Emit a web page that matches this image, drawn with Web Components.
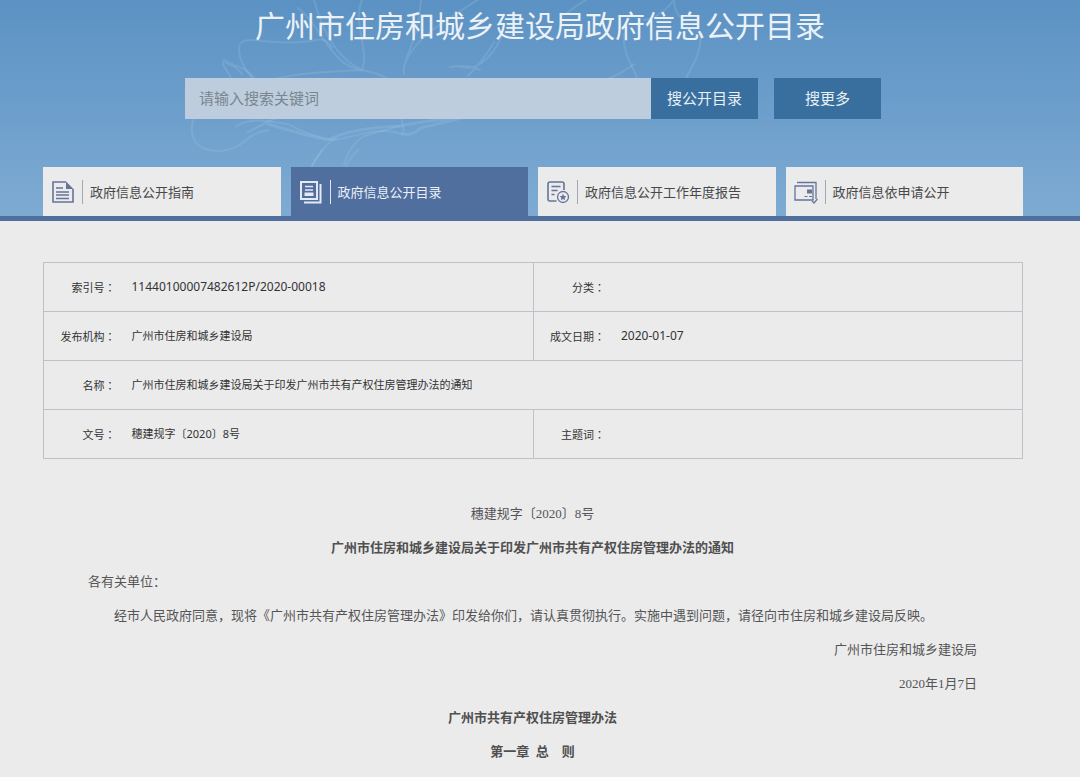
<!DOCTYPE html>
<html lang="zh-CN">
<head>
<meta charset="utf-8">
<meta name="viewport" content="width=device-width, initial-scale=1">
<title>广州市住房和城乡建设局政府信息公开目录</title>
<style>
  :root {
    --accent: #506e9e;
    --paper: #ebebec;
    --gutter-left: 43px;
    --gutter-right: 57px;
    --sans: "Noto Sans", "Noto Sans CJK SC", sans-serif;
    --song: "Liberation Serif", "Noto Sans CJK SC", serif;
  }
  body { margin: 0; background: var(--paper); color: #333; font-family: var(--sans); }
</style>
</head>
<body>
<gov-header>
  <span slot="title">广州市住房和城乡建设局政府信息公开目录</span>
  <search-bar slot="search"></search-bar>
  <tab-link slot="tabs" icon="guide">政府信息公开指南</tab-link>
  <tab-link slot="tabs" icon="catalog" active>政府信息公开目录</tab-link>
  <tab-link slot="tabs" icon="report">政府信息公开工作年度报告</tab-link>
  <tab-link slot="tabs" icon="apply">政府信息依申请公开</tab-link>
</gov-header>
<page-main>
  <record-table></record-table>
  <doc-article>
    <doc-line align="center">穗建规字〔2020〕8号</doc-line>
    <doc-line align="center" strong>广州市住房和城乡建设局关于印发广州市共有产权住房管理办法的通知</doc-line>
    <doc-line>各有关单位：</doc-line>
    <doc-line indent>经市人民政府同意，现将《广州市共有产权住房管理办法》印发给你们，请认真贯彻执行。实施中遇到问题，请径向市住房和城乡建设局反映。</doc-line>
    <doc-line align="right">广州市住房和城乡建设局</doc-line>
    <doc-line align="right">2020年1月7日</doc-line>
    <doc-line align="center" strong>广州市共有产权住房管理办法</doc-line>
    <doc-line align="center" strong>第一章&ensp;总&emsp;则</doc-line>
  </doc-article>
</page-main>

<template id="gov-header">
  <style>
    :host { display: block; }
    header {
      position: relative; overflow: hidden;
      padding-top: 6px;
      background: linear-gradient(#5b92c3, #6b9dcb 45%, #7eabd2);
      border-bottom: 5px solid var(--accent);
    }
    .flower { position: absolute; left: 180px; top: 0; width: 540px; height: 216px; }
    .content { position: relative; }
    h1 { margin: 0 0 32px; font-size: 30px; line-height: 40px; font-weight: 400; text-align: center; color: #ecf1f6; }
    .inner { padding: 0 var(--gutter-right) 0 var(--gutter-left); }
    nav { display: grid; grid-template-columns: repeat(4, 1fr); gap: 10px; margin-top: 48px; }
  </style>
  <header>
    <svg class="flower" viewBox="180 0 540 216" fill="none" stroke="#a3cbea" stroke-opacity=".22" stroke-width="2" stroke-linecap="round" aria-hidden="true">
      <path d="M252 78C242 66 237 54 240 44Q244 38 262 41Q290 44 312 41Q326 36 332 48"/>
      <path d="M232 80C228 70 220 64 224 60C232 66 246 66 254 78M226 63Q236 66 242 74"/>
      <path d="M362 70C330 66 322 26 298 8M362 70C336 58 322 30 314 0M362 70C370 50 352 24 362 0"/>
      <path d="M362 70C330 72 270 72 246 92M362 70C382 74 396 80 402 96Q400 116 404 132"/>
      <path d="M404 74C402 58 418 44 421 0M404 66Q412 44 438 26T478 0"/>
      <path d="M502 36C490 62 474 72 458 66M450 67Q468 64 480 70M494 42Q484 60 468 76"/>
      <path d="M193 120C188 142 200 152 222 151C246 148 244 134 268 130M236 126C252 116 272 122 288 124C306 134 320 138 334 140C358 136 378 126 402 134"/>
      <path d="M268 124Q300 134 328 140Q350 128 400 126Q430 120 458 118M402 134Q414 136 420 128L470 116" stroke-width="3"/>
      <path d="M312 165C322 150 328 142 336 138M344 165Q350 144 364 136L400 126M248 132Q290 110 322 98"/>
      <path d="M624 34C622 52 632 64 637 78M700 34C702 50 694 64 686 78M644 20Q660 18 674 0M674 0Q674 14 684 20"/>
      <path d="M566 14Q578 4 586 0M610 78Q624 72 634 64M344 170Q350 158 358 150M310 170Q316 158 322 150"/>
    </svg>
    <div class="content">
      <h1><slot name="title"></slot></h1>
      <div class="inner">
        <slot name="search"></slot>
        <nav aria-label="栏目"><slot name="tabs"></slot></nav>
      </div>
    </div>
  </header>
</template>

<template id="search-bar">
  <style>
    :host { display: block; max-width: 696px; margin: 0 auto; }
    form { display: flex; height: 41px; margin: 0; }
    input, button { font-family: var(--sans); font-size: 15px; border: 0; border-radius: 0; box-sizing: border-box; }
    input { flex: 1; min-width: 0; padding: 0 14px 2px; background: #bdcddd; color: #333; outline: 0; }
    input::placeholder { color: #7b8590; opacity: 1; }
    button { width: 107px; padding: 0 0 2px; background: #386f9f; color: #eaf0f5; cursor: pointer; }
    .more { margin-left: 16px; }
  </style>
  <form role="search">
    <input type="text" placeholder="请输入搜索关键词" aria-label="请输入搜索关键词">
    <button type="button">搜公开目录</button>
    <button type="button" class="more">搜更多</button>
  </form>
</template>

<template id="tab-link">
  <style>
    :host { display: block; min-width: 0; }
    a {
      display: flex; align-items: center; height: 49px; padding-left: 8px;
      background: var(--paper); color: #484848; font-size: 13px; text-decoration: none; white-space: nowrap;
    }
    svg { width: 24px; height: 24px; color: #66749a; flex: none; }
    .text { margin-left: 7px; padding-left: 7px; line-height: 24px; border-left: 1px solid #a3a9b3; }
    :host([active]) a { background: var(--accent); color: #e9eef7; }
    :host([active]) svg { color: #e4e9f3; }
    :host([active]) .text { border-color: #dfe5f0; }
  </style>
  <a href="#"><svg viewBox="0 0 24 24" fill="none" stroke="currentColor" stroke-width="1.6" aria-hidden="true"></svg><span class="text"><slot></slot></span></a>
</template>

<template id="page-main">
  <style>
    :host { display: block; }
    main { padding: 41px var(--gutter-right) 0 var(--gutter-left); }
  </style>
  <main><slot></slot></main>
</template>

<template id="record-table">
  <style>
    :host { display: block; }
    table { width: 100%; border-collapse: collapse; table-layout: fixed; font-size: 11px; line-height: 16px; color: #333; }
    .label { width: 72px; }
    th, td { height: 48px; padding: 0; border: 1px solid #bcc2c7; }
    th { font-weight: 400; text-align: right; border-right: 0; white-space: nowrap; }
    td { padding-left: 16px; border-left: 0; text-align: left; }
    .num { font-size: 12px; }
    .colon { font-family: "Noto Sans CJK TC", sans-serif; }
  </style>
  <table>
    <colgroup><col class="label"><col><col class="label"><col></colgroup>
    <tbody>
      <tr><th scope="row">索引号<span class="colon" lang="zh-TW">：</span></th><td class="num">11440100007482612P/2020-00018</td><th scope="row">分类<span class="colon" lang="zh-TW">：</span></th><td></td></tr>
      <tr><th scope="row">发布机构<span class="colon" lang="zh-TW">：</span></th><td>广州市住房和城乡建设局</td><th scope="row">成文日期<span class="colon" lang="zh-TW">：</span></th><td class="num">2020-01-07</td></tr>
      <tr><th scope="row">名称<span class="colon" lang="zh-TW">：</span></th><td colspan="3">广州市住房和城乡建设局关于印发广州市共有产权住房管理办法的通知</td></tr>
      <tr><th scope="row">文号<span class="colon" lang="zh-TW">：</span></th><td>穗建规字〔2020〕8号</td><th scope="row">主题词<span class="colon" lang="zh-TW">：</span></th><td></td></tr>
    </tbody>
  </table>
</template>

<template id="doc-article">
  <style>
    :host { display: block; margin-top: 38px; }
    article { padding: 0 46px 0 45px; font-family: var(--song); font-size: 13px; line-height: 34px; color: #555; }
  </style>
  <article><slot></slot></article>
</template>

<template id="doc-line">
  <style>
    :host { display: block; }
    p { margin: 0; }
    :host([align="center"]) p { text-align: center; }
    :host([align="right"]) p { text-align: right; }
    :host([indent]) p { text-indent: 2em; }
    :host([strong]) p { font-weight: 700; color: #505050; }
  </style>
  <p><slot></slot></p>
</template>

<script>
  const ICONS = {
    guide: '<path d="M15 2H2v20h20V9"/><path d="M15 1.5V9h7.5z" fill="currentColor" stroke="none"/><path d="M5 8h7M5 12h13M5 15h13M5 18.500h13"/>',
    catalog: '<path d="M2 2h16v17H2z" stroke-width="2"/><path d="M21.500 4v18.500H5" stroke-width="2"/><path d="M6 6.500h8M6 10h8"/><path d="M5.500 12.500h9V16h-9z" fill="currentColor" stroke="none"/>',
    report: '<path d="M10.500 21H4q-2 0-2-2V4q0-2 2-2h12q2 0 2 2v6"/><path d="M5.500 6.500h9M5.500 10.500h6M5.500 14.500h3"/><circle cx="17" cy="17" r="5.500" stroke-width="1.300"/><path d="M17 13.700l1 2.200 2.400.3-1.800 1.700.5 2.400-2.100-1.200-2.100 1.200.5-2.400-1.800-1.700 2.400-.3z" fill="currentColor" stroke="none"/>',
    apply: '<path d="M1 6h18v14H1z" stroke-width="1.300"/><path d="M3 2.500h19V19" stroke-width="1.300"/><path d="M13 9.500h5v4h-5z" fill="currentColor" stroke="none"/><path d="M10.500 16.500h3M15 16.500h3" stroke-width="1.200"/><path d="M18 21l2 2 3.500-4" stroke-width="1.200"/>'
  };

  class TemplateElement extends HTMLElement {
    constructor() {
      super();
      const template = document.getElementById(this.localName);
      this.attachShadow({ mode: 'open' }).append(template.content.cloneNode(true));
    }
  }

  customElements.define('gov-header', class extends TemplateElement {});
  customElements.define('search-bar', class extends TemplateElement {});
  customElements.define('page-main', class extends TemplateElement {});
  customElements.define('record-table', class extends TemplateElement {});
  customElements.define('doc-article', class extends TemplateElement {});
  customElements.define('doc-line', class extends TemplateElement {});
  customElements.define('tab-link', class extends TemplateElement {
    connectedCallback() {
      this.shadowRoot.querySelector('svg').innerHTML = ICONS[this.getAttribute('icon')] || '';
      if (this.hasAttribute('active')) this.shadowRoot.querySelector('a').setAttribute('aria-current', 'page');
    }
  });
</script>
</body>
</html>
